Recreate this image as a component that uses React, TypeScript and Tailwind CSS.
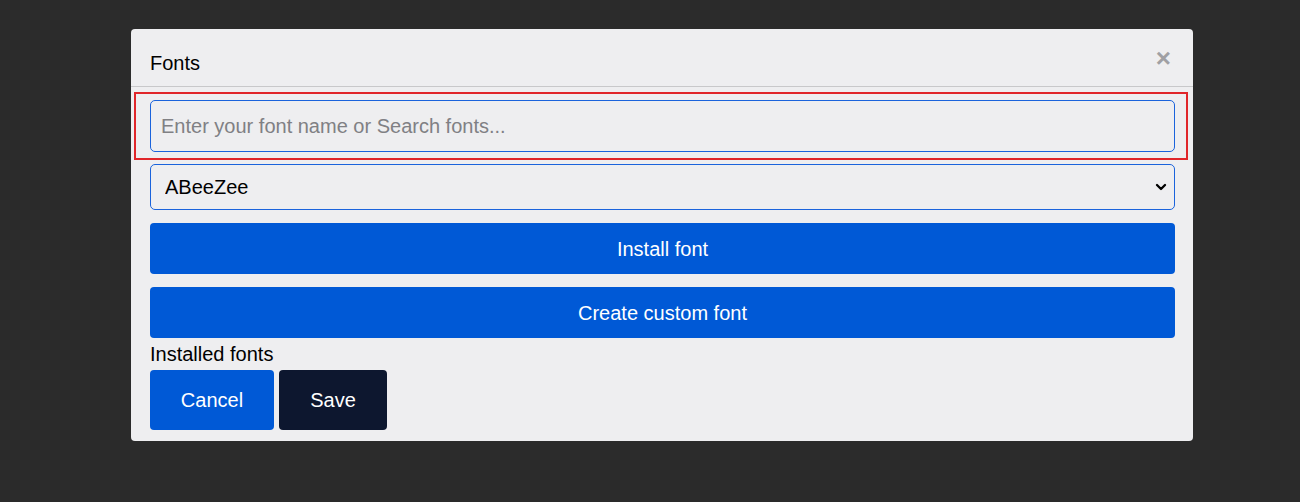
import { ChevronDown } from 'lucide-react';

export default function App() {
  return (
    <div
      className="w-[1300px] h-[502px] bg-[#2b2b2b] bg-[repeating-conic-gradient(#2a2a2a_0%_25%,#2c2c2c_0%_50%)] bg-[length:20px_20px] pt-[29px] pl-[131px] font-['Liberation_Sans',Arial,sans-serif]"
    >
      {/* Modal */}
      <div className="w-[1062px] h-[412px] bg-[#eeeef0] rounded-[4px] flex flex-col">
        {/* Header */}
        <div className="h-[58px] border-b border-[#c8c8ca] flex items-center justify-between pl-[19px] pr-[22px] pt-[10px]">
          <h2 className="text-[20px] text-black">Fonts</h2>
          <button className="text-[#a0a0a4] text-[26px] font-bold leading-none -mt-[9px]">×</button>
        </div>

        {/* Body */}
        <div className="flex flex-col pl-[19px] pr-[18px] pt-[13px]">
          <div className="relative">
            <div className="absolute -left-[16px] -right-[13px] -top-[8px] -bottom-[8px] border-2 border-[#e0262a] pointer-events-none" />
            <input
              className="w-full h-[52px] border border-[#1a63dc] rounded-[5px] bg-transparent px-[10px] text-[20px] text-black placeholder:text-[#808084] outline-none"
              placeholder="Enter your font name or Search fonts..."
            />
          </div>

          <div className="relative mt-[12px]">
            <select className="appearance-none w-full h-[46px] border border-[#1a63dc] rounded-[5px] bg-transparent pl-[14px] text-[20px] text-black outline-none">
              <option>ABeeZee</option>
            </select>
            <ChevronDown className="absolute right-[6px] top-[15px] w-[16px] h-[16px] text-black pointer-events-none" strokeWidth={3.5} />
          </div>

          <button className="mt-[13px] h-[51px] w-full bg-[#0059d6] rounded-[4px] text-white text-[20px]">
            Install font
          </button>
          <button className="mt-[13px] h-[51px] w-full bg-[#0059d6] rounded-[4px] text-white text-[20px]">
            Create custom font
          </button>

          <div className="mt-[5px] text-[20px] text-black leading-[23px]">Installed fonts</div>

          <div className="flex gap-[5px] mt-[4px]">
            <button className="w-[124px] h-[60px] bg-[#0059d6] rounded-[4px] text-white text-[20px]">Cancel</button>
            <button className="w-[108px] h-[60px] bg-[#0d172f] rounded-[4px] text-white text-[20px]">Save</button>
          </div>
        </div>
      </div>
    </div>
  );
}
